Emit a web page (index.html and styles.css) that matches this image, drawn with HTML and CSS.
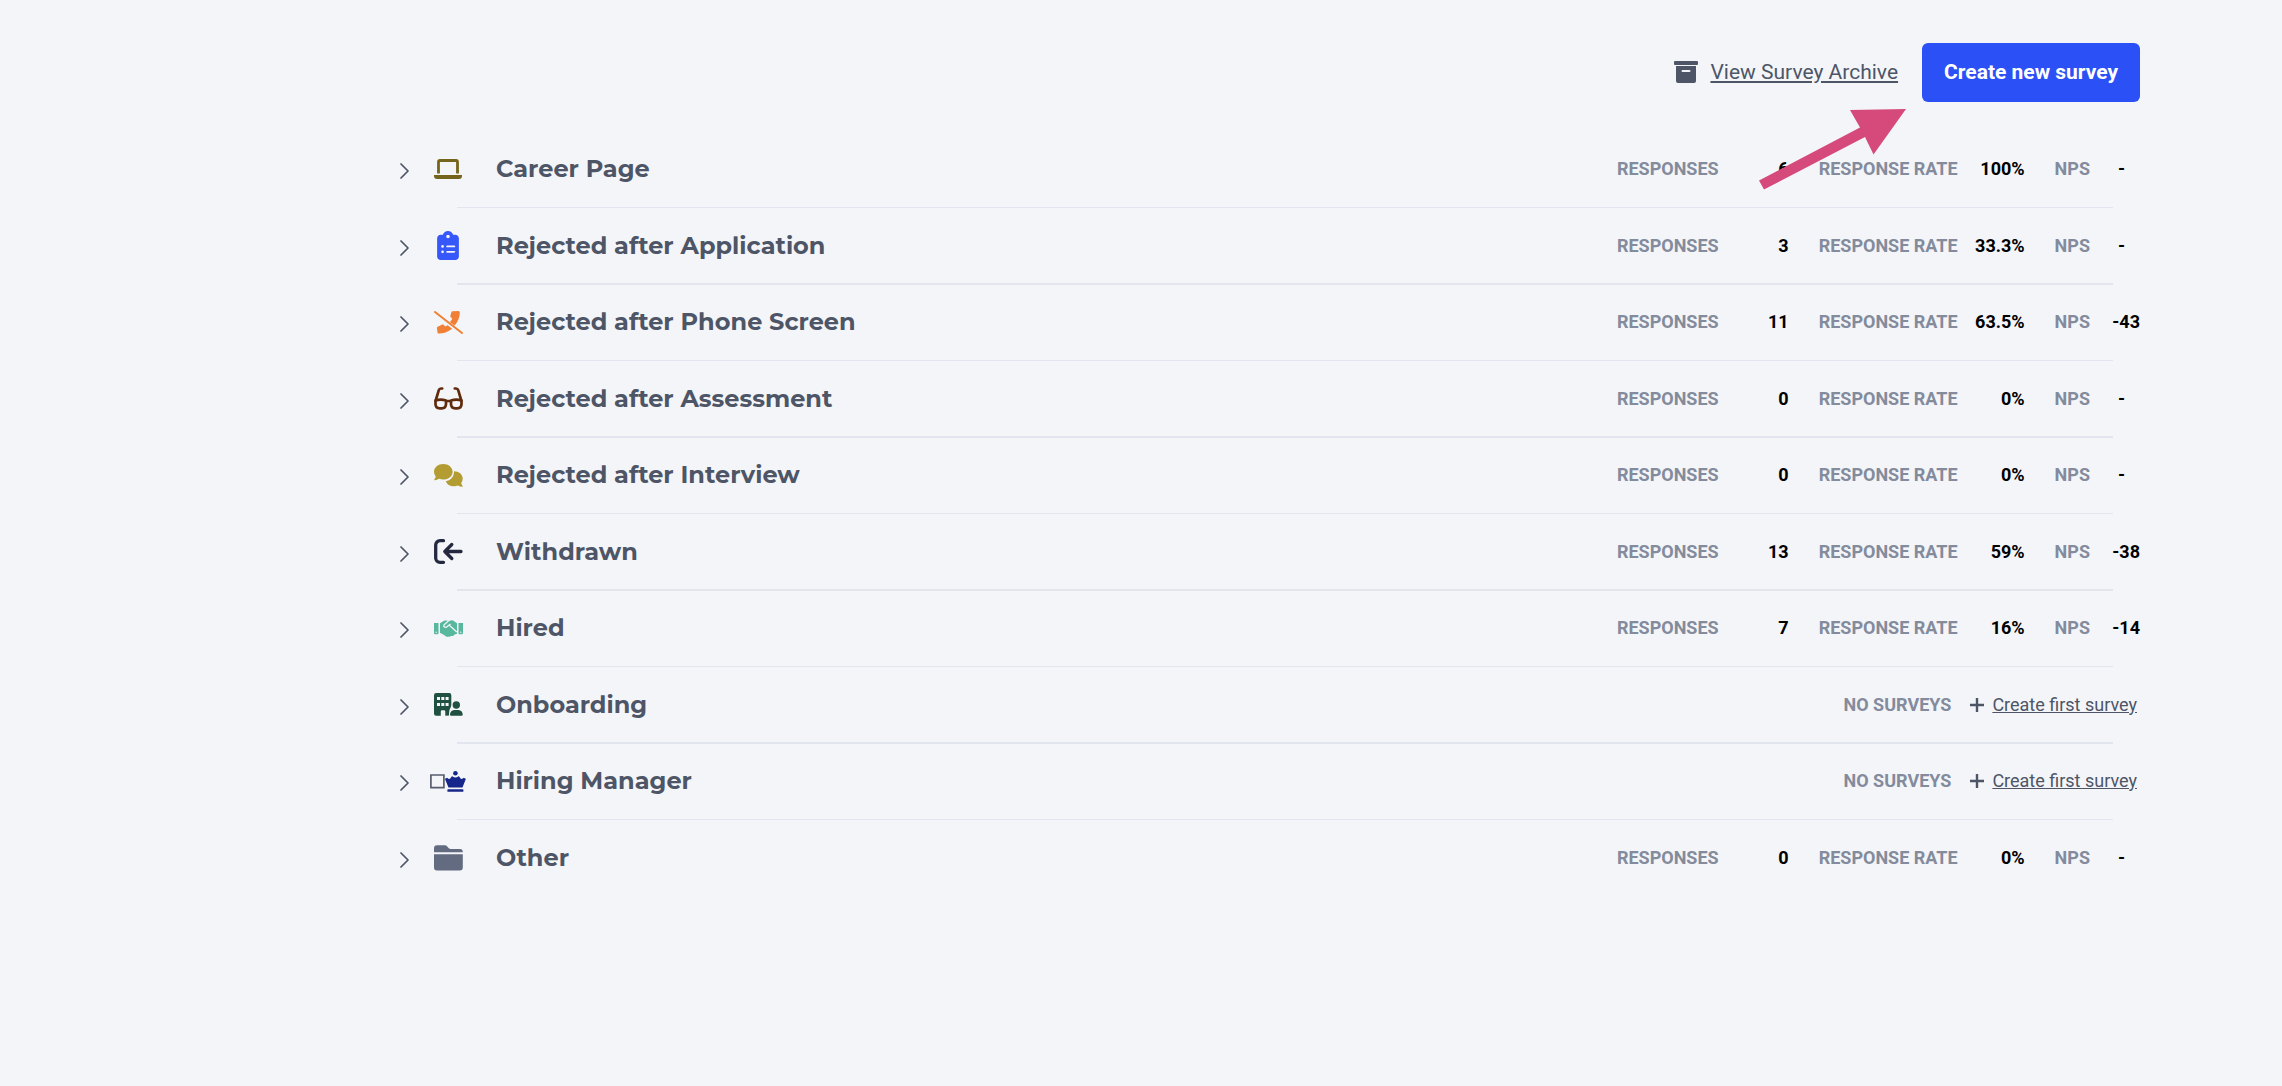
FILE: index.html
```
<!DOCTYPE html>
<html lang="en">
<head>
  <meta charset="UTF-8" />
  <meta name="viewport" content="width=device-width, initial-scale=1.0"/>
  <title>Surveys</title>
  <link rel="stylesheet" href="styles.css">
</head>
<body>
  <main class="page">
    <header class="toolbar">
      <a class="archive-link" href="#">
        <svg width="24" height="22" viewBox="0 0 24 22" fill="currentColor"><path d="M1 0h22a1 1 0 0 1 1 1v2a1 1 0 0 1-1 1H1a1 1 0 0 1-1-1V1a1 1 0 0 1 1-1zM2 5h20v15a2 2 0 0 1-2 2H4a2 2 0 0 1-2-2zM8.500 9a1 1 0 0 0 0 2h7a1 1 0 0 0 0-2z"/></svg>
        <span>View Survey Archive</span>
      </a>
      <button class="create-btn" type="button">Create new survey</button>
      <svg class="pointer" width="148" height="82" viewBox="0 0 148 82"><path d="M147 0L114.500 45.500 106 28 5 80.500 0 71.500 101 18.500 91 1z" fill="#d54a7b"/></svg>
    </header>

    <ul class="survey-list" id="survey-list"></ul>
  </main>

  <script>
    const icons = {
      laptop: '<svg width="28" height="20" viewBox="0 0 28 20"><path d="M4.500 14.500V3q0-1.500 1.500-1.500h16q1.500 0 1.500 1.500v11.500" fill="none" stroke="#75651a" stroke-width="2.800"/><path d="M0 16h28v1a3 3 0 0 1-3 3H3a3 3 0 0 1-3-3z" fill="#75651a"/></svg>',
      clipboard: '<svg width="22" height="29" viewBox="0 0 384 512"><path fill="#3658fa" d="M192 0c-41.800 0-77.400 26.700-90.500 64H64C28.700 64 0 92.700 0 128V448c0 35.300 28.700 64 64 64H320c35.300 0 64-28.700 64-64V128c0-35.300-28.700-64-64-64H282.500C269.400 26.700 233.800 0 192 0zm0 64a32 32 0 1 1 0 64 32 32 0 1 1 0-64zM72 272a24 24 0 1 1 48 0 24 24 0 1 1-48 0zm104-16H304c8.800 0 16 7.200 16 16s-7.200 16-16 16H176c-8.800 0-16-7.200-16-16s7.200-16 16-16zM72 368a24 24 0 1 1 48 0 24 24 0 1 1-48 0zm88 0c0-8.800 7.200-16 16-16H304c8.800 0 16 7.200 16 16s-7.200 16-16 16H176c-8.800 0-16-7.200-16-16z"/></svg>',
      phone: '<svg width="29" height="23" viewBox="0 0 29 23"><g fill="#f08035"><path d="M18.500 .2L24.500 0q1.300 0 1.300 1.500 0 7.500-5.300 12.900L15.900 11q1.700-1.600 2.400-3.200L16.600 5.900q-.5-.6-.2-1.300L17.500 1q.3-.7 1-.8z"/><path d="M3.200 16L8.300 13.500q.8-.3 1.300.3l1.500 1.700 2.600-1.200 4.500 3.400Q11.500 22.500 5 22.600q-1.400 0-1.500-1.200L2.900 17q0-.7.3-1z"/></g><path d="M1 1L28 22" stroke="#f08035" stroke-width="2" stroke-linecap="round"/></svg>',
      glasses: '<svg width="29" height="23" viewBox="0 0 29 23"><g fill="none" stroke="#602a0c" stroke-width="2.700" stroke-linecap="round" stroke-linejoin="round"><path d="M8.200 1.500H7q-1.700 0-2.200 1.600L1.700 13.500M20.800 1.500H22q1.700 0 2.200 1.600L27.300 13.500"/><path d="M1.500 13.500Q6.500 11.800 12 13.500V17q0 4.300-4.300 4.300H5.800Q1.500 21.300 1.500 17zM17 13.500Q22.500 11.800 27.500 13.500V17q0 4.300-4.300 4.300H21.300Q17 21.300 17 17zM12 14h5"/></g></svg>',
      comments: '<svg width="29" height="23" viewBox="0 0 29 23"><g fill="#b39d33"><path d="M9.300 0C14.500 0 18.600 3.400 18.600 7.800S14.500 15.600 9.300 15.600q-2.300 0-4.200-.8Q2.800 16.300.5 16.200 0 16 .3 15.500 1.500 14 1.700 12.500 0 10.500 0 7.800C0 3.400 4.100 0 9.300 0z"/><path d="M20 7.200c5 0 8.700 3.200 8.700 7.400q0 2.500-1.500 4.400.3 1.600 1.500 3 .2.700-.4.800-2.300 0-4.300-1.300-1.800.8-4 .8c-4 0-7.200-2-8.200-5 4.700-1 8.300-4.500 8.200-10.100z"/></g></svg>',
      leave: '<svg width="29" height="25" viewBox="0 0 29 25"><path d="M9.500 1.700H6a4.300 4.300 0 0 0-4.300 4.300v13A4.300 4.300 0 0 0 6 23.300h3.500M27 12.500H11M17.800 5.500L10.800 12.500l7 7" fill="none" stroke="#24293f" stroke-width="3.300" stroke-linecap="round" stroke-linejoin="round"/></svg>',
      handshake: '<svg width="29" height="17" viewBox="0 0 29 17"><g fill="#58b89e"><path d="M0 3h4.500v10q0 1.200-1.200 1.200H1.200Q0 14.200 0 13zM24.500 3H29v10q0 1.200-1.200 1.200h-2.100q-1.200 0-1.200-1.200z"/><path d="M6 3.200L10 .8Q11 .3 12 .5L14.500 1 17 .4q1-.3 2 .1L23 3.200v10.600q-2 .2-3.200 1.400-1 1.300-2.600.6-1.200 1.500-2.700.8-1.700.7-3-.6L7.500 13.500 6 13z"/></g><path d="M14.500 1L10 4.800Q9.200 6.400 11 7.200q1.200.4 2.300-.7l1.800-1.400 7.700 7M16.500 4l-1.800 1.400" fill="none" stroke="#f4f5f9" stroke-width="1.300"/><circle cx="2.200" cy="12.300" r=".7" fill="#f4f5f9"/><circle cx="26.800" cy="12.300" r=".7" fill="#f4f5f9"/></svg>',
      building: '<svg width="29" height="23" viewBox="0 0 29 23"><g fill="#20503f"><path fill-rule="evenodd" d="M2.200 0h13Q17.300 0 17.300 2.200V12q-.5 3-1.300 3.800-1 1.500-1 6.700l-3.700.3V18.500q0-1.200-1.300-1.200H8q-1.200 0-1.200 1.200v4.300H2.200Q0 22.800 0 20.600V2.200Q0 0 2.200 0zM3 4v3h3V4zm4.300 0v3h3V4zm4.300 0v3h3V4zM3 10v3h3v-3zm4.300 0v3h3v-3zm4.300 0v3h3v-3z"/><circle cx="22.300" cy="12" r="3.700"/><path d="M20.300 17h4.200Q28.700 17.500 28.700 21.800q0 1-1 1H17q-1 0-1-1Q16 17.500 20.300 17z"/></g></svg>',
      crown: '<svg width="36" height="21" viewBox="0 0 36 21"><path d="M.9 4h13v12.600H.9z" fill="none" stroke="#565e6e" stroke-width="1.700"/><g fill="#17268a"><circle cx="25.400" cy="2.300" r="2.300"/><path d="M15.200 8.600q-.5-.7.300-1.200l1.200-.5q.6-.2 1 .4 1.300 1.200 2.800 0l.9-1.500q.5-.9 1.300-.4 1.100 1 2.700 1t2.700-1q.8-.5 1.300.4l.9 1.500q1.500 1.200 2.800 0 .4-.6 1-.4l1.200.5q.8.500.3 1.200L32.500 16.500h-14zM18 18.300h14.800q.6 0 .6.700v1.200q0 .6-.6.600H18q-.6 0-.6-.6V19q0-.7.600-.7z"/></g></svg>',
      folder: '<svg width="29" height="26" viewBox="0 0 29 26"><path d="M3 .3h8q1.200 0 2 .9l1.800 2q.8.800 2 .8H26q2.800 0 2.800 3v.3H0V3.300Q0 .3 3 .3zM0 9.300h28.800v13.200q0 3-3 3H3q-3 0-3-3z" fill="#626b80"/></svg>'
    };

    const surveys = [
      { name: "Career Page", icon: "laptop", responses: "6", rate: "100%", nps: "-" },
      { name: "Rejected after Application", icon: "clipboard", responses: "3", rate: "33.3%", nps: "-" },
      { name: "Rejected after Phone Screen", icon: "phone", responses: "11", rate: "63.5%", nps: "-43" },
      { name: "Rejected after Assessment", icon: "glasses", responses: "0", rate: "0%", nps: "-" },
      { name: "Rejected after Interview", icon: "comments", responses: "0", rate: "0%", nps: "-" },
      { name: "Withdrawn", icon: "leave", responses: "13", rate: "59%", nps: "-38" },
      { name: "Hired", icon: "handshake", responses: "7", rate: "16%", nps: "-14" },
      { name: "Onboarding", icon: "building" },
      { name: "Hiring Manager", icon: "crown" },
      { name: "Other", icon: "folder", responses: "0", rate: "0%", nps: "-" }
    ];

    function statsHtml(s) {
      if (!s.responses) {
        return `
          <div class="no-surveys">
            <span class="label">NO SURVEYS</span>
            <a class="first-link" href="#">
              <svg width="14" height="14" viewBox="0 0 14 14"><path d="M7 0v14M0 7h14" stroke="currentColor" stroke-width="2.400"/></svg>
              <span>Create first survey</span>
            </a>
          </div>`;
      }
      return `
        <dl class="stats">
          <div class="stat"><dt class="label">RESPONSES</dt><dd class="responses">${s.responses}</dd></div>
          <div class="stat"><dt class="label">RESPONSE RATE</dt><dd class="rate">${s.rate}</dd></div>
          <div class="stat"><dt class="label">NPS</dt><dd class="nps ${s.nps === "-" ? "empty" : ""}">${s.nps}</dd></div>
        </dl>`;
    }

    document.getElementById('survey-list').innerHTML = surveys.map(s => `
      <li class="survey">
        <div class="survey-row">
          <button class="toggle" type="button" aria-label="Expand ${s.name}">
            <svg width="9" height="16" viewBox="0 0 9 16"><path d="M1 1l7 7-7 7" fill="none" stroke="currentColor" stroke-width="1.700" stroke-linecap="round" stroke-linejoin="round"/></svg>
          </button>
          <span class="icon">${icons[s.icon]}</span>
          <h2>${s.name}</h2>
          ${statsHtml(s)}
        </div>
      </li>`).join('');
  </script>
</body>
</html>
```
FILE: styles.css
```
body {
  font-family: Roboto, sans-serif;
  background-color: #f4f5f9;
  color: #4d5566;
  margin: 0;
}

.page {
  padding: 43px 142px 43px 400px;
}

.toolbar {
  position: relative;
  display: flex;
  justify-content: flex-end;
  align-items: center;
  gap: 24px;
  margin-bottom: 30px;
}

.archive-link,
.first-link {
  display: flex;
  align-items: center;
  color: #4d5566;
  text-decoration: none;
}

.archive-link span,
.first-link span {
  text-decoration: underline;
}

.archive-link {
  gap: 12px;
  font-size: 21px;
  padding-bottom: 2px;
}

.create-btn {
  background-color: #2b50f6;
  border: none;
  border-radius: 6px;
  color: white;
  cursor: pointer;
  font-family: inherit;
  font-size: 21px;
  font-weight: 700;
  line-height: 27px;
  padding: 16px 22px;
}

.create-btn:hover {
  background-color: #2446dc;
}

/* arrow lies over the first row */
.pointer {
  position: absolute;
  top: 66px;
  right: 233px;
  pointer-events: none;
}

.survey-list {
  list-style-type: none;
  margin: 0;
  padding: 0;
}

.survey-row {
  display: flex;
  align-items: center;
  height: 74px;
}

.survey:nth-child(even) .survey-row {
  height: 75px;
}

.survey:not(:last-child)::after {
  content: "";
  display: block;
  height: 1px;
  margin: 1px 27px 0 57px;
  background-color: #e2e4ee;
}

.survey:nth-child(even)::after {
  height: 2px;
  margin-top: 0;
}

.toggle {
  display: flex;
  background: none;
  border: none;
  color: #4d5566;
  cursor: pointer;
  padding: 4px 0 0;
}

.icon {
  display: flex;
  justify-content: center;
  width: 36px;
  margin-left: 21px;
}

h2 {
  flex: 1;
  font-family: Montserrat, Inter, sans-serif;
  font-size: 24px;
  font-weight: 700;
  line-height: 30px;
  margin: 0 0 0 30px;
}

.stats,
.stat,
.no-surveys {
  display: flex;
  align-items: center;
  font-size: 18px;
  line-height: 24px;
  margin: 0;
}

.stats {
  gap: 30px;
}

.label {
  color: #838b9c;
  font-weight: 700;
}

dd {
  color: #000;
  font-weight: 700;
  margin: 0;
  text-align: right;
}

.responses {
  width: 70px;
}

.rate {
  width: 67px;
}

.nps {
  box-sizing: border-box;
  width: 50px;
}

.nps.empty {
  padding-right: 15px;
}

.no-surveys {
  gap: 19px;
}

.first-link {
  gap: 8px;
  padding-right: 3px;
}
```
